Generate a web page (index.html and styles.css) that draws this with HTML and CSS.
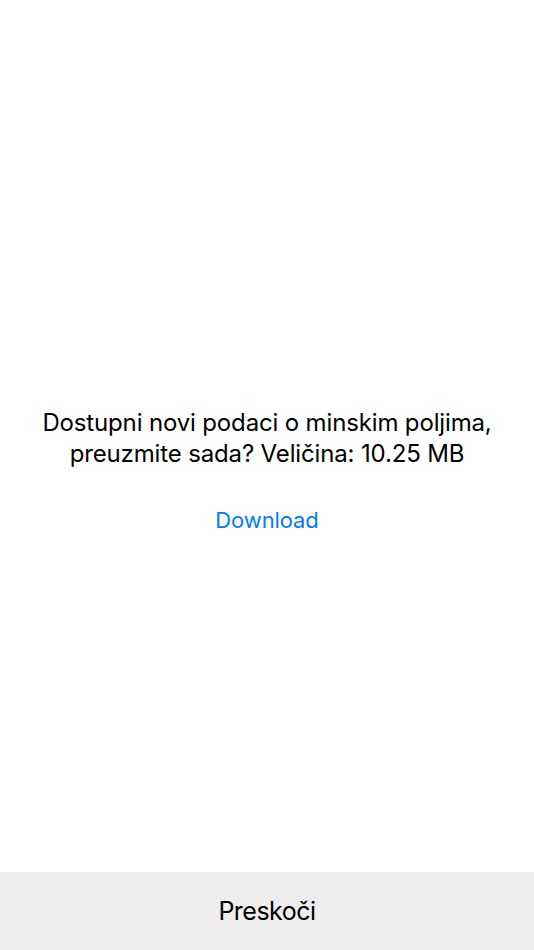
FILE: index.html
```html
<!DOCTYPE html>
<html lang="hr">
<head>
<meta charset="utf-8">
<link rel="stylesheet" href="styles.css">
</head>
<body>
<div class="screen">
  <main class="content">
    <p class="message">Dostupni novi podaci o minskim poljima,<br>preuzmite sada? Veličina: 10.25 MB</p>
    <a class="download" href="#">Download</a>
  </main>
  <footer class="footer">
    <span class="skip">Preskoči</span>
  </footer>
</div>
</body>
</html>
```
FILE: styles.css
```css
html, body {
  margin: 0;
  padding: 0;
  background: #ffffff;
}
body {
  font-family: Inter, "Noto Sans", sans-serif;
  color: #000;
}
.screen {
  width: 534px;
  height: 950px;
  display: flex;
  flex-direction: column;
}
.content {
  flex: 1;
  display: flex;
  flex-direction: column;
  align-items: center;
  padding-top: 407px;
  box-sizing: border-box;
}
.message {
  margin: 0;
  font-size: 24px;
  line-height: 31px;
  text-align: center;
  letter-spacing: -0.15px;
}
.download {
  margin-top: 38px;
  font-size: 22px;
  line-height: 26px;
  color: #007aff;
  text-decoration: none;
  letter-spacing: -0.1px;
}
.footer {
  height: 78px;
  background: #eeeeee;
  display: flex;
  align-items: center;
  justify-content: center;
}
.skip {
  font-size: 25px;
  letter-spacing: -0.5px;
}
```
